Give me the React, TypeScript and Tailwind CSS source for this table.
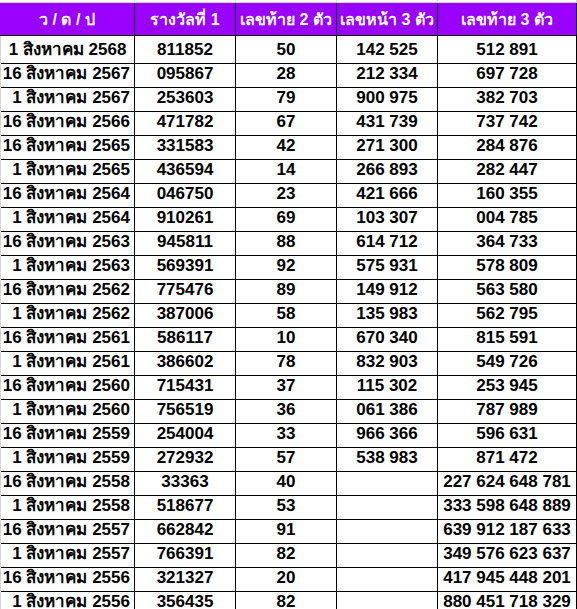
import React from 'react';

type Row = [string, string, string, string, string];

const ROWS: Row[] = [
  ['1 สิงหาคม 2568', '811852', '50', '142 525', '512 891'],
  ['16 สิงหาคม 2567', '095867', '28', '212 334', '697 728'],
  ['1 สิงหาคม 2567', '253603', '79', '900 975', '382 703'],
  ['16 สิงหาคม 2566', '471782', '67', '431 739', '737 742'],
  ['16 สิงหาคม 2565', '331583', '42', '271 300', '284 876'],
  ['1 สิงหาคม 2565', '436594', '14', '266 893', '282 447'],
  ['16 สิงหาคม 2564', '046750', '23', '421 666', '160 355'],
  ['1 สิงหาคม 2564', '910261', '69', '103 307', '004 785'],
  ['16 สิงหาคม 2563', '945811', '88', '614 712', '364 733'],
  ['1 สิงหาคม 2563', '569391', '92', '575 931', '578 809'],
  ['16 สิงหาคม 2562', '775476', '89', '149 912', '563 580'],
  ['1 สิงหาคม 2562', '387006', '58', '135 983', '562 795'],
  ['16 สิงหาคม 2561', '586117', '10', '670 340', '815 591'],
  ['1 สิงหาคม 2561', '386602', '78', '832 903', '549 726'],
  ['16 สิงหาคม 2560', '715431', '37', '115 302', '253 945'],
  ['1 สิงหาคม 2560', '756519', '36', '061 386', '787 989'],
  ['16 สิงหาคม 2559', '254004', '33', '966 366', '596 631'],
  ['1 สิงหาคม 2559', '272932', '57', '538 983', '871 472'],
  ['16 สิงหาคม 2558', '33363', '40', '', '227 624 648 781'],
  ['1 สิงหาคม 2558', '518677', '53', '', '333 598 648 889'],
  ['16 สิงหาคม 2557', '662842', '91', '', '639 912 187 633'],
  ['1 สิงหาคม 2557', '766391', '82', '', '349 576 623 637'],
  ['16 สิงหาคม 2556', '321327', '20', '', '417 945 448 201'],
  ['1 สิงหาคม 2556', '356435', '82', '', '880 451 718 329'],
];

const HEAD = ['ว / ด / ป', 'รางวัลที่ 1', 'เลขท้าย 2 ตัว', 'เลขหน้า 3 ตัว', 'เลขท้าย 3 ตัว'];

const grid = 'grid grid-cols-[135px_101px_101px_101px_1fr]';

export default function App() {
  return (
    <div className="w-[577px] h-[609px] overflow-hidden bg-white font-['Liberation_Sans','Noto_Sans',sans-serif] font-bold text-black">
      {/* excel gridline strip above the header */}
      <div className={`${grid} h-[2px] border-b border-[#d4d4d4] box-content`}>
        {HEAD.map((_, i) => (
          <div key={i} className="border-r border-[#d4d4d4]" />
        ))}
      </div>
      <div className={`${grid} h-[33px] bg-[#9900ff] text-white`}>
        {HEAD.map((h, i) => (
          <div key={i} className="flex items-center justify-center border-r border-b border-black text-[16px] whitespace-nowrap pt-[1px]">
            {h}
          </div>
        ))}
      </div>
      {ROWS.map((r, ri) => (
        <div key={ri} className={`${grid} h-6`}>
          {r.map((c, ci) => (
            <div
              key={ci}
              className={`flex items-center border-r border-b border-black text-[17px] whitespace-nowrap pt-[1px] ${
                ci === 0 ? (ri === 0 ? 'justify-center border-l border-l-[#d4d4d4]' : 'justify-end pr-[4px] border-l border-l-[#d4d4d4]') : 'justify-center'
              }`}
            >
              {c}
            </div>
          ))}
        </div>
      ))}
    </div>
  );
}
